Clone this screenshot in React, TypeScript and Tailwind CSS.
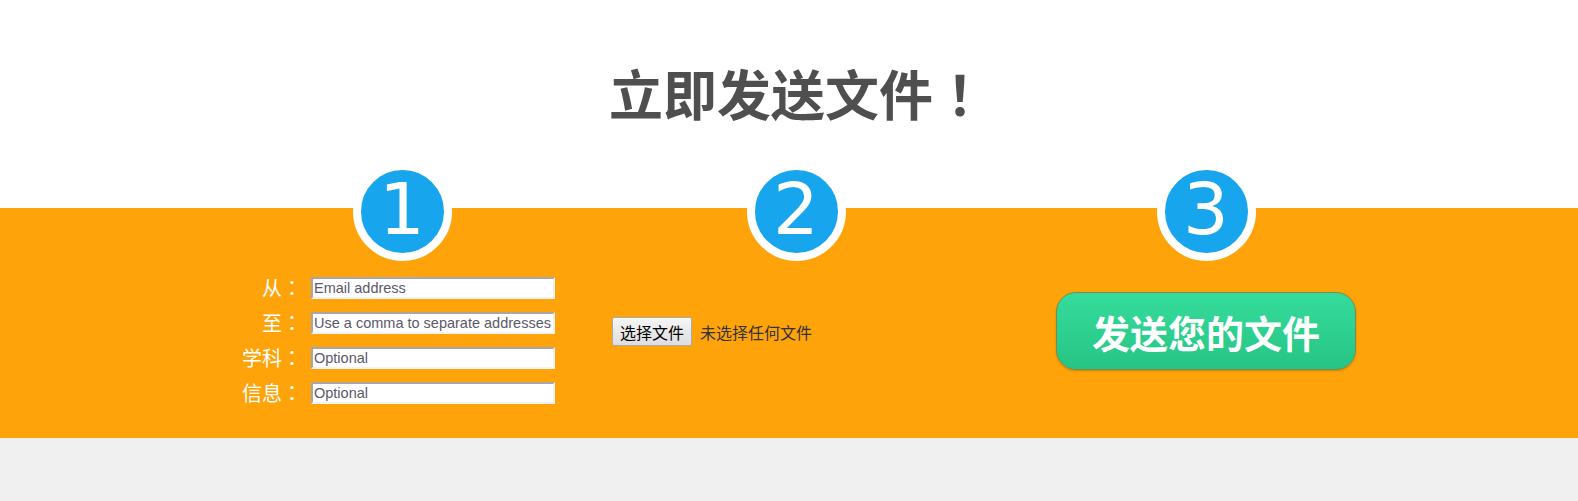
import React from 'react';

const cjk = { fontFamily: '"Noto Sans CJK SC", sans-serif' };

// full-width punctuation centred in its box, as in the original font
const Punct: React.FC<{ children: React.ReactNode }> = ({ children }) => (
  <span className="[font-family:'Noto_Sans_CJK_TC',sans-serif]">{children}</span>
);

const StepBadge: React.FC<{ n: number }> = ({ n }) => (
  <div className="-mt-[46px] flex h-[99px] w-[99px] items-center justify-center rounded-full border-[8px] border-white bg-[#17a5ee]">
    <span className="-mt-[6px] text-[72px] leading-none text-white [font-family:'DejaVu_Sans',sans-serif]">{n}</span>
  </div>
);

const fields = [
  { label: '从', placeholder: 'Email address' },
  { label: '至', placeholder: 'Use a comma to separate addresses' },
  { label: '学科', placeholder: 'Optional' },
  { label: '信息', placeholder: 'Optional' },
];

const App: React.FC = () => {
  return (
    <div className="min-h-[501px] w-full bg-[#f0f0f0]" style={cjk}>
      <div className="flex h-[208px] justify-center bg-white pl-[18px] pt-[57px]">
        <h1 className="text-[54px] font-bold leading-[72px] text-[#4f4f4f]">
          立即发送文件<Punct>！</Punct>
        </h1>
      </div>

      <div className="flex h-[230px] bg-[#fea309] pl-[204px]">
        <div className="flex w-[396px] flex-col items-center">
          <StepBadge n={1} />
          <div className="mt-[16px] flex w-full flex-col gap-[13px] pl-[26px]">
            {fields.map((f) => (
              <div key={f.label} className="flex items-center gap-[9px]">
                <span className="w-[72px] text-right text-[20px] leading-[22px] text-white">
                  {f.label}
                  <Punct>：</Punct>
                </span>
                <input
                  type="text"
                  placeholder={f.placeholder}
                  className="h-[22px] w-[244px] border-2 border-t-[#a7a7a7] border-l-[#a7a7a7] border-r-[#f3f3f3] border-b-[#f3f3f3] bg-white px-[1px] text-[14.5px] text-[#555] outline-none placeholder:text-[#5c5868] [font-family:'Liberation_Sans',sans-serif]"
                />
              </div>
            ))}
          </div>
        </div>

        <div className="flex w-[392px] flex-col items-center">
          <StepBadge n={2} />
          <div className="mt-[56px] flex w-full items-center gap-[8px] pl-[12px]">
            <button className="h-[29px] w-[80px] rounded-[2px] border border-[#a9a9a9] bg-gradient-to-b from-[#f6f6f6] to-[#dedede] text-[16px] text-black">
              选择文件
            </button>
            <span className="text-[16px] text-[#333]">未选择任何文件</span>
          </div>
        </div>

        <div className="flex w-[428px] flex-col items-center">
          <StepBadge n={3} />
          <button className="mt-[31px] flex h-[78px] w-[300px] items-center justify-center rounded-[20px] border border-[#6f8f4c] bg-gradient-to-b from-[#35dc9b] to-[#26c485] text-[38px] font-bold text-white shadow-[0_1px_2px_rgba(0,0,0,0.2)]">
            发送您的文件
          </button>
        </div>
      </div>
    </div>
  );
};

export default App;
